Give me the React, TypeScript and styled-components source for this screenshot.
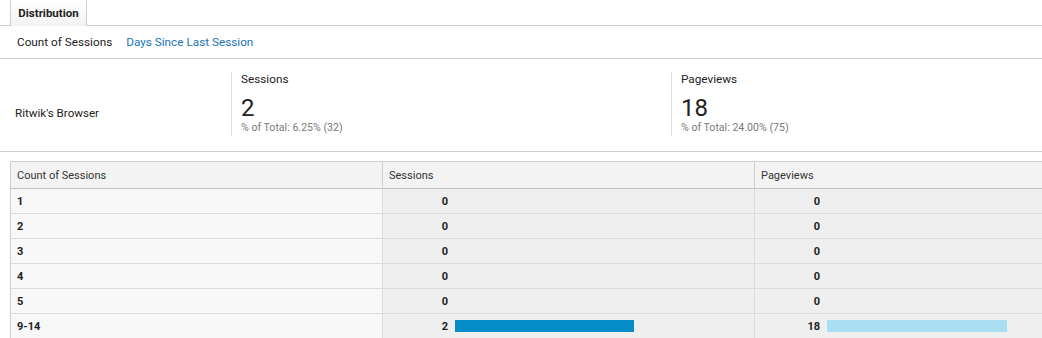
import React from 'react';
import styled, { createGlobalStyle } from 'styled-components';

const GlobalStyle = createGlobalStyle`
  html, body {
    margin: 0;
    padding: 0;
    background: #fff;
    overflow: hidden;
  }
  body {
    font-family: Roboto, "Liberation Sans", Arial, sans-serif;
    color: #222;
  }
`;

const Page = styled.div`
  width: 1042px;
  height: 338px;
  overflow: hidden;
`;

const TabBar = styled.div`
  height: 25px;
  border-bottom: 1px solid #cfcfcf;
  display: flex;
  padding-left: 10px;
`;

const Tab = styled.div`
  width: 77px;
  height: 26px;
  border-left: 1px solid #cfcfcf;
  border-right: 1px solid #cfcfcf;
  background: linear-gradient(#ffffff, #f3f3f3);
  font-size: 11.5px;
  font-weight: 700;
  color: #222;
  display: flex;
  align-items: center;
  justify-content: center;
  padding-bottom: 1px;
  box-sizing: border-box;
  position: relative;
  z-index: 1;
`;

const SubNav = styled.div`
  height: 32px;
  border-bottom: 1px solid #cfcfcf;
  display: flex;
  align-items: center;
  gap: 14px;
  padding-left: 17px;
  font-size: 11.75px;
`;

const SubItem = styled.span<{ $link?: boolean }>`
  color: ${(p) => (p.$link ? '#1a73b8' : '#222')};
  cursor: ${(p) => (p.$link ? 'pointer' : 'default')};
`;

const Summary = styled.div`
  height: 92px;
  border-bottom: 1px solid #cfcfcf;
  display: grid;
  grid-template-columns: 231px 440px 1fr;
  align-items: start;
`;

const SegmentName = styled.div`
  font-size: 11.6px;
  padding-left: 15px;
  height: 100%;
  display: flex;
  align-items: center;
  padding-top: 16px;
  box-sizing: border-box;
`;

const Metric = styled.div`
  margin-top: 13px;
  height: 64px;
  border-left: 1px solid #ddd;
  padding-left: 9px;
  display: flex;
  flex-direction: column;
`;

const MetricLabel = styled.div`
  font-size: 11.75px;
  line-height: 14px;
  color: #222;
`;

const MetricValue = styled.div`
  font-size: 24px;
  line-height: 24px;
  margin-top: 10px;
  color: #222;
`;

const MetricSub = styled.div`
  font-size: 10.6px;
  line-height: 12px;
  color: #7a7a7a;
  margin-top: 2px;
`;

const Table = styled.div`
  margin: 9px 0 0 10px;
  border-left: 1px solid #cfcfcf;
  border-top: 1px solid #cfcfcf;
`;

const Row = styled.div<{ $head?: boolean }>`
  display: grid;
  grid-template-columns: 371px 372px 1fr;
  height: ${(p) => (p.$head ? '26px' : '24px')};
  border-bottom: 1px solid ${(p) => (p.$head ? '#c4c4c4' : '#dcdcdc')};
  background: ${(p) => (p.$head ? '#f3f3f3' : '#efefef')};
`;

const HeadCell = styled.div`
  font-size: 11px;
  color: #333;
  padding-left: 6px;
  display: flex;
  align-items: center;
  & + & {
    border-left: 1px solid #cfcfcf;
  }
`;

const KeyCell = styled.div`
  background: #f8f8f8;
  font-size: 11px;
  font-weight: 700;
  color: #222;
  padding-left: 6px;
  display: flex;
  align-items: center;
`;

const ValueCell = styled.div`
  border-left: 1px solid #dcdcdc;
  display: flex;
  align-items: center;
`;

const Num = styled.span`
  width: 65px;
  text-align: right;
  font-size: 11px;
  font-weight: 700;
  color: #222;
`;

const Bar = styled.span<{ $color: string }>`
  margin-left: 7px;
  height: 12px;
  background: ${(p) => p.$color};
`;

const rows = [
  { key: '1', sessions: 0, pageviews: 0 },
  { key: '2', sessions: 0, pageviews: 0 },
  { key: '3', sessions: 0, pageviews: 0 },
  { key: '4', sessions: 0, pageviews: 0 },
  { key: '5', sessions: 0, pageviews: 0 },
  { key: '9-14', sessions: 2, pageviews: 18 },
];

const maxSessions = 2;
const maxPageviews = 18;

export default function App() {
  return (
    <Page>
      <GlobalStyle />
      <TabBar>
        <Tab>Distribution</Tab>
      </TabBar>
      <SubNav>
        <SubItem>Count of Sessions</SubItem>
        <SubItem $link>Days Since Last Session</SubItem>
      </SubNav>
      <Summary>
        <SegmentName>Ritwik's Browser</SegmentName>
        <Metric>
          <MetricLabel>Sessions</MetricLabel>
          <MetricValue>2</MetricValue>
          <MetricSub>% of Total: 6.25% (32)</MetricSub>
        </Metric>
        <Metric>
          <MetricLabel>Pageviews</MetricLabel>
          <MetricValue>18</MetricValue>
          <MetricSub>% of Total: 24.00% (75)</MetricSub>
        </Metric>
      </Summary>
      <Table>
        <Row $head>
          <HeadCell>Count of Sessions</HeadCell>
          <HeadCell>Sessions</HeadCell>
          <HeadCell>Pageviews</HeadCell>
        </Row>
        {rows.map((r) => (
          <Row key={r.key}>
            <KeyCell>{r.key}</KeyCell>
            <ValueCell>
              <Num>{r.sessions}</Num>
              {r.sessions > 0 && (
                <Bar $color="#058dc7" style={{ width: (r.sessions / maxSessions) * 179 }} />
              )}
            </ValueCell>
            <ValueCell>
              <Num>{r.pageviews}</Num>
              {r.pageviews > 0 && (
                <Bar $color="#aadff3" style={{ width: (r.pageviews / maxPageviews) * 180 }} />
              )}
            </ValueCell>
          </Row>
        ))}
      </Table>
    </Page>
  );
}
